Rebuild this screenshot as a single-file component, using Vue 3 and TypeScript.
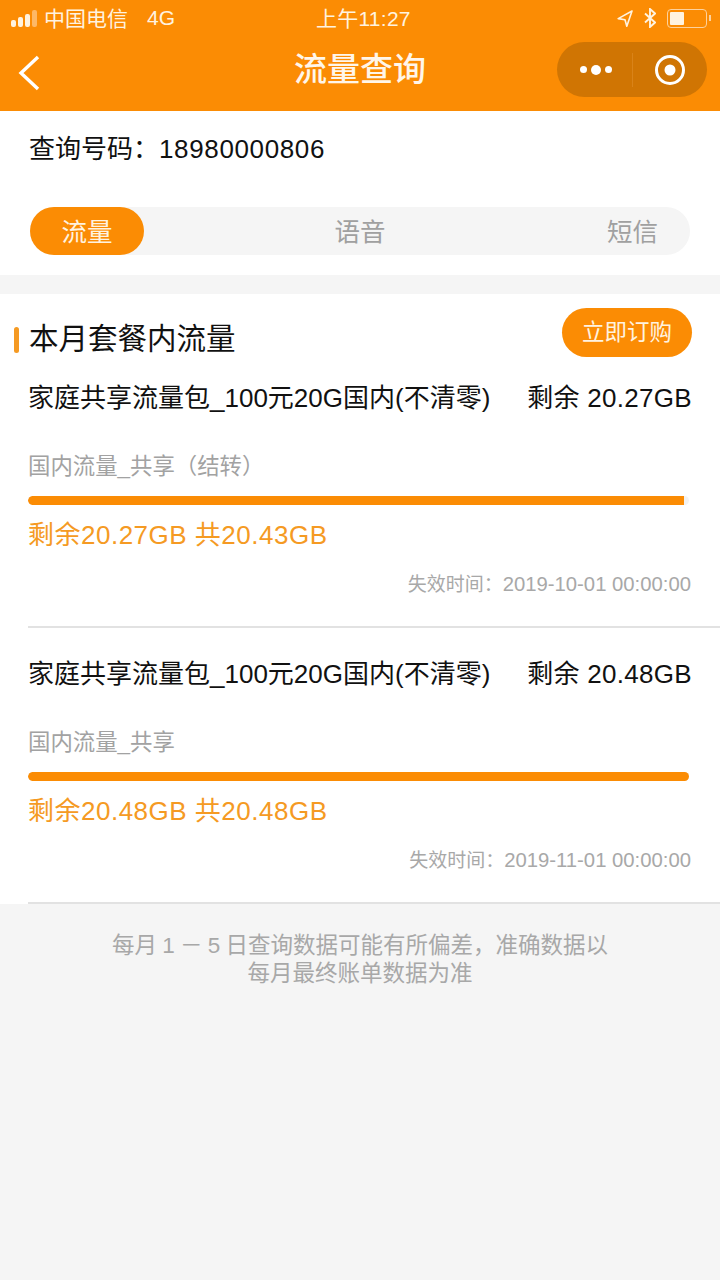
<script setup lang="ts">
interface Pack { name: string; left: string; label: string; pct: number; usage: string; expire: string }
const packs: Pack[] = [
  { name: '家庭共享流量包_100元20G国内(不清零)', left: '剩余 20.27GB', label: '国内流量_共享（结转）', pct: 99.2, usage: '剩余20.27GB 共20.43GB', expire: '2019-10-01 00:00:00' },
  { name: '家庭共享流量包_100元20G国内(不清零)', left: '剩余 20.48GB', label: '国内流量_共享', pct: 100, usage: '剩余20.48GB 共20.48GB', expire: '2019-11-01 00:00:00' },
]
</script>

<template>
  <div class="page">
    <header class="head">
      <div class="status">
        <div class="st-left">
          <span class="bars"><i></i><i></i><i></i><i class="dim"></i></span>
          <span class="carrier">中国电信</span>
          <span class="net">4G</span>
        </div>
        <span class="clock">上午11:27</span>
        <div class="st-right">
          <svg width="16" height="17" viewBox="0 0 16 17"><path d="M15 1 1.2 8.6l6.8 1.2 1.8 6.4z" fill="none" stroke="#fff3e0" stroke-width="1.6" stroke-linejoin="round"/></svg>
          <svg width="12" height="20" viewBox="0 0 12 20"><path d="M1 5.5l10 9-5 4.5V1l5 4.5-10 9" fill="none" stroke="#fff3e0" stroke-width="1.9"/></svg>
          <div class="battery"><div class="level"></div></div>
          <div class="nub"></div>
        </div>
      </div>
      <div class="nav">
        <svg class="back" width="22" height="36" viewBox="0 0 22 36"><path d="M20 2 3 18l17 16" fill="none" stroke="#fff" stroke-width="3.4"/></svg>
        <h1 class="title">流量查询</h1>
        <div class="capsule">
          <div class="dots"><i></i><i class="big"></i><i></i></div>
          <div class="sep"></div>
          <svg width="32" height="32" viewBox="0 0 32 32"><circle cx="16" cy="16" r="13.5" fill="none" stroke="#fff" stroke-width="3"/><circle cx="16" cy="16" r="5.5" fill="#fff"/></svg>
        </div>
      </div>
    </header>

    <section class="query">
      <div class="number"><span>查询号码：</span><span class="digits">18980000806</span></div>
      <div class="tabs">
        <div class="tab active">流量</div>
        <div class="tab mid">语音</div>
        <div class="tab end">短信</div>
      </div>
    </section>

    <section class="card">
      <div class="card-head">
        <div class="heading"><span class="mark"></span><span>本月套餐内流量</span></div>
        <div class="buy">立即订购</div>
      </div>
      <article v-for="p in packs" :key="p.expire" class="pack">
        <div class="row"><span>{{ p.name }}</span><span class="left">{{ p.left }}</span></div>
        <div class="label">{{ p.label }}</div>
        <div class="track"><div class="fill" :style="{ width: p.pct + '%' }"></div></div>
        <div class="usage">{{ p.usage }}</div>
        <div class="expire"><span class="exp-label">失效时间：</span><span>{{ p.expire }}</span></div>
      </article>
    </section>

    <p class="note">每月 1 － 5 日查询数据可能有所偏差，准确数据以<br>每月最终账单数据为准</p>
  </div>
</template>

<style>
html, body { margin: 0; background: #f5f5f5; }
</style>

<style scoped>
.page { width: 720px; height: 1280px; overflow: hidden; background: #f5f5f5; font-family: "Liberation Sans", "Noto Sans CJK SC", sans-serif; }
.head { height: 111px; background: #fb8c04; color: #fff; }
.status { height: 36px; padding: 0 9px 0 11px; display: flex; align-items: center; justify-content: space-between; position: relative; color: #fff3e0; font-size: 21px; }
.st-left, .st-right { display: flex; align-items: center; }
.bars { display: flex; align-items: flex-end; gap: 2px; margin-right: 7px; }
.bars i { width: 5px; background: #fff3e0; border-radius: 2px; }
.bars i:nth-child(1) { height: 7px; }
.bars i:nth-child(2) { height: 10px; }
.bars i:nth-child(3) { height: 13px; }
.bars i:nth-child(4) { height: 17px; }
.bars .dim { background: #fdb866; }
.carrier { margin-bottom: 2px; }
.net { margin-left: 19px; }
.clock { position: absolute; left: 316px; top: 6px; line-height: 26px; letter-spacing: 0.25px; }
.st-right { gap: 11px; }
.battery { width: 40px; height: 19px; box-sizing: border-box; border: 1px solid #fdd19c; border-radius: 4px; padding: 2px; }
.level { width: 14px; height: 13px; background: #fff3e0; border-radius: 1px; }
.nub { width: 2px; height: 6px; margin-left: -9px; background: #fdd19c; }
.nav { height: 75px; position: relative; display: flex; align-items: center; justify-content: center; }
.back { position: absolute; left: 18px; top: 19px; }
.title { margin: 0; font-size: 33px; font-weight: 500; color: #fff6ea; transform: translateY(-7px); }
.capsule { position: absolute; left: 557px; top: 6px; width: 150px; height: 55px; box-sizing: border-box; padding-left: 23px; border-radius: 28px; background: #d07503; display: flex; align-items: center; }
.dots { width: 32px; display: flex; align-items: center; justify-content: space-between; }
.dots i { width: 7px; height: 7px; border-radius: 50%; background: #fff; }
.dots .big { width: 10px; height: 10px; }
.sep { width: 1px; height: 34px; margin: 0 21px 0 20px; background: #d98319; }
.query { height: 164px; box-sizing: border-box; padding: 20px 30px 0 29px; background: #fff; }
.number { font-size: 26px; line-height: 36px; color: #111; }
.digits { letter-spacing: 0.63px; }
.tabs { margin: 40px 0 0 1px; height: 48px; border-radius: 24px; background: #f5f5f5; display: flex; align-items: center; justify-content: space-between; color: #a0a0a0; font-size: 25.5px; }
.tab { height: 48px; line-height: 50px; }
.active { width: 114px; text-align: center; border-radius: 24px; background: #fb8c04; color: #fff3e0; }
.mid { margin-right: 31px; }
.end { margin-right: 32px; }
.card { margin-top: 19px; height: 610px; background: #fff; padding-top: 14px; box-sizing: border-box; }
.card-head { display: flex; align-items: flex-start; justify-content: space-between; padding: 0 28px 0 14px; height: 44px; }
.heading { display: flex; align-items: center; gap: 10px; font-size: 29.5px; color: #111; height: 56px; }
.mark { width: 5px; height: 26px; margin-top: 7px; border-radius: 3px; background: #f59a23; }
.buy { width: 130px; height: 49px; line-height: 49px; text-align: center; border-radius: 25px; background: #fb8c04; color: #fff3e0; font-size: 22.5px; flex-shrink: 0; }
.pack { margin-left: 28px; height: 276px; box-sizing: border-box; padding-top: 28px; border-bottom: 2px solid #e2e2e2; }
.row { display: flex; justify-content: space-between; padding-right: 28px; font-size: 26px; line-height: 36px; color: #111; }
.left { letter-spacing: 0.3px; }
.label { margin-top: 34px; font-size: 22.4px; line-height: 34px; color: #a2a2a2; }
.track { margin: 12px 31px 0 0; height: 9px; border-radius: 5px; background: #f2f2f2; overflow: hidden; }
.fill { height: 100%; border-radius: 5px 0 0 5px; background: #fb8c04; }
.usage { margin-top: 11px; font-size: 26px; letter-spacing: 0.5px; line-height: 38px; color: #f59a23; }
.expire { margin-top: 15px; padding-right: 29px; text-align: right; font-size: 20.3px; line-height: 30px; color: #a8a8a8; }
.exp-label { font-size: 19px; }
.note { margin: 28px 0 0; text-align: center; font-size: 22.5px; line-height: 28px; word-spacing: -1px; color: #a8a8a8; }
</style>
